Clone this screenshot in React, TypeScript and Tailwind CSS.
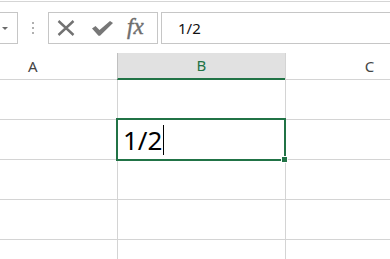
export default function App() {
  const grid = 'border-[#d4d4d4]';
  const rows = [0, 1, 2, 3, 4];

  return (
    <div className="relative w-[390px] h-[259px] overflow-hidden bg-white font-['Noto_Sans',sans-serif]">
      {/* Formula bar */}
      <div className="mt-px h-[52px] border-t border-[#d5d5d5] flex items-start pt-[10px]">
        {/* Name box (cut off) */}
        <div className="w-[18px] h-[32px] border border-l-0 border-[#c6c6c6] flex items-center justify-center">
          <div className="w-0 h-0 border-l-[3px] border-r-[3px] border-t-[3px] border-l-transparent border-r-transparent border-t-[#6a6a6a] -ml-[7px]" />
        </div>
        {/* Grip dots */}
        <div className="w-[30px] h-[32px] flex flex-col items-center justify-center gap-[3px]">
          <span className="w-[2px] h-[2px] bg-[#b0b0b0]" />
          <span className="w-[2px] h-[2px] bg-[#b0b0b0]" />
          <span className="w-[2px] h-[2px] bg-[#b0b0b0]" />
        </div>
        {/* Cancel / Enter / Insert function */}
        <div className="w-[110px] h-[32px] border border-[#c6c6c6] flex items-center pl-[8px]">
          <svg width="18" height="16" viewBox="0 0 18 16">
            <path d="M1.5 1 L16.5 15 M16.5 1 L1.5 15" stroke="#727272" strokeWidth="2.4" fill="none" />
          </svg>
          <svg width="21" height="15" viewBox="0 0 21 15" className="ml-[17px]">
            <path d="M0 7.5 L3.5 5 L7.5 9 L18 0 L21 2 L8 14.8 L6.5 14.8 Z" fill="#777" />
          </svg>
          <span className="ml-[14px] font-['Liberation_Serif',serif] italic text-[23px] leading-none text-[#6e6e6e] -mt-[3px] [-webkit-text-stroke:0.4px_#6e6e6e]">
            fx
          </span>
        </div>
        {/* Formula input */}
        <div className="ml-[3px] flex-1 h-[32px] border border-r-0 border-[#c6c6c6] flex items-center pl-[16px]">
          <span className="text-[15px] text-[#111] leading-none">1/2</span>
        </div>
      </div>

      {/* Column headers */}
      <div className="h-[27px] flex text-[15px] leading-none">
        <div className={`shrink-0 w-[117px] border-b ${grid} flex items-center pl-[28px] text-[#444]`}>A</div>
        <div className="shrink-0 w-[168px] bg-[#e1e1e1] border-l border-l-[#c0c0c0] border-b-2 border-b-[#217346] flex items-center justify-center text-[#217346]">
          B
        </div>
        <div className={`shrink-0 w-[168px] border-l border-b ${grid} flex items-center justify-center text-[#444]`}>C</div>
      </div>

      {/* Cells */}
      {rows.map((r) => (
        <div key={r} className={`h-[40px] flex border-b ${grid}`}>
          <div className={`shrink-0 w-[118px] border-r ${grid}`} />
          <div className={`shrink-0 w-[168px] border-r ${grid} flex items-center pl-[5px]`}>
            {r === 1 && (
              <span className="flex items-center text-[26px] leading-none text-black">
                1/2
                <span className="ml-px w-px h-[30px] bg-black" />
              </span>
            )}
          </div>
          <div className="flex-1" />
        </div>
      ))}

      {/* Active cell selection */}
      <div className="absolute left-[116px] top-[118px] w-[170px] h-[43px] border-2 border-[#217346]" />
      <div className="absolute left-[281px] top-[156px] w-[7px] h-[7px] bg-white" />
      <div className="absolute left-[282px] top-[157px] w-[5px] h-[5px] bg-[#217346]" />
    </div>
  );
}
